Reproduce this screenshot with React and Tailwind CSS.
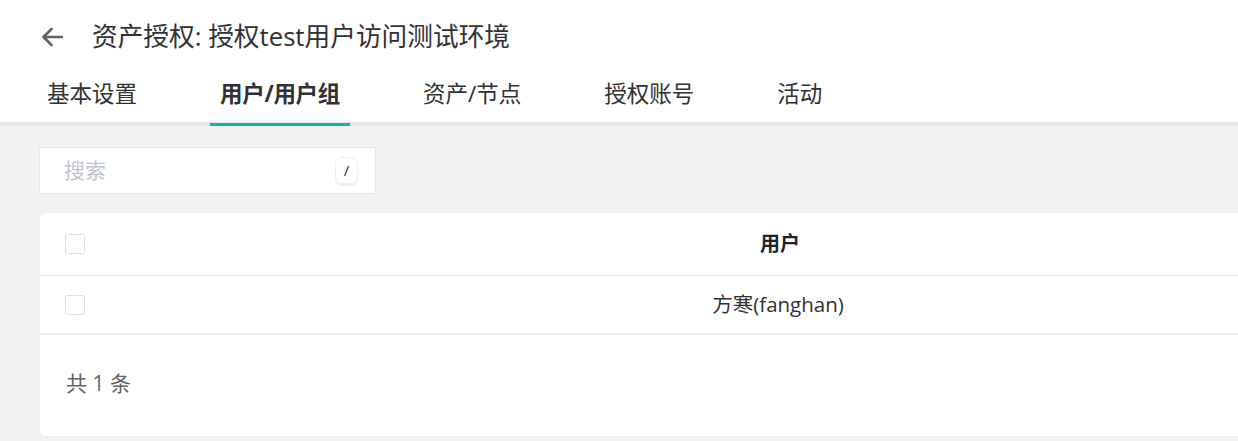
import React from 'react';

const tabs = [
  { key: 'basic', label: '基本设置' },
  { key: 'users', label: '用户/用户组' },
  { key: 'assets', label: '资产/节点' },
  { key: 'accounts', label: '授权账号' },
  { key: 'activity', label: '活动' },
];

const users = [{ id: 1, name: '方寒(fanghan)' }];

const Checkbox = () => (
  <span className="block w-5 h-5 rounded-[2px] border border-[#dcdfe6] bg-white" />
);

const App = () => {
  const active = 'users';

  return (
    <div
      className="w-[1238px] h-[441px] overflow-hidden bg-[#f2f2f3] text-[#303133]"
      style={{ fontFamily: '"Open Sans", "Noto Sans CJK SC", sans-serif' }}
    >
      <div className="bg-white">
        <div className="flex items-center h-[74px] pl-[41px]">
          <svg width="22" height="20" viewBox="0 0 22 20" className="text-[#606266]">
            <path
              d="M21 10H2.5M10.5 2L2.5 10L10.5 18"
              fill="none"
              stroke="currentColor"
              strokeWidth="2.6"
              strokeLinecap="round"
              strokeLinejoin="round"
            />
          </svg>
          <h1 className="ml-[29px] text-[25.7px] leading-none text-[#303133]">
            资产授权: 授权test用户访问测试环境
          </h1>
        </div>
        <div className="flex gap-[63px] pl-[37px] border-b-4 border-[#e4e7ed] h-[52px]">
          {tabs.map(t => (
            <div
              key={t.key}
              className={`relative px-[10px] pt-[1px] text-[22.5px] leading-[38px] ${
                t.key === active ? 'font-bold text-[#303133] tracking-[-0.3px]' : 'text-[#303133]'
              }`}
            >
              {t.label}
              {t.key === active && (
                <span className="absolute left-0 right-0 -bottom-[4px] h-[3px] bg-[#1ab394]" />
              )}
            </div>
          ))}
        </div>
      </div>

      <div className="pl-[39px] pt-[21px]">
        <div className="flex items-center justify-between w-[337px] h-[47px] bg-white border border-[#e4e7ed] pl-[24px] pr-[17px]">
          <span className="text-[21px] text-[#c0c4cc]">搜索</span>
          <span className="flex items-center justify-center w-[23px] h-[27px] rounded-[7px] border border-[#ebeef5] shadow-[0_2px_0_#ebeef5] text-[15px] text-[#303133]">
            /
          </span>
        </div>

        <div className="mt-[18px] w-[1422px] h-[225px] bg-white rounded-[6px] border border-[#ebeef5]">
          <div className="flex items-center h-[63px] border-b border-[#e4e7ed]">
            <div className="w-[60px] pl-[25px]">
              <Checkbox />
            </div>
            <div className="flex-1 text-center text-[20px] font-bold text-[#1f2329]">用户</div>
          </div>
          {users.map(u => (
            <div key={u.id} className="flex items-center h-[59px] border-b-2 border-[#ebeef5]">
              <div className="w-[60px] pl-[25px]">
                <Checkbox />
              </div>
              <div className="flex-1 text-center text-[20.5px] text-[#303133] pr-[4px]">{u.name}</div>
            </div>
          ))}
          <div className="flex items-center h-[97px] pl-[26px] text-[21px] text-[#606266]">
            共 1 条
          </div>
        </div>
      </div>
    </div>
  );
};

export default App;
